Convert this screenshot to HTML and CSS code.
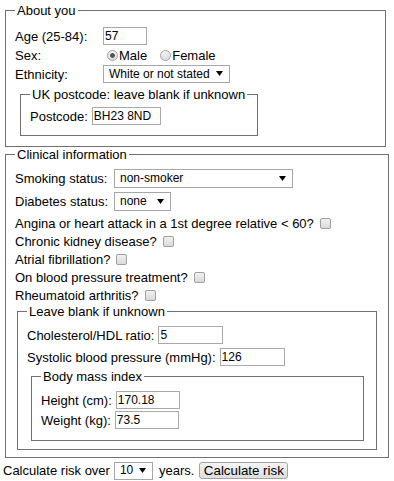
FILE: index.html
```html
<!DOCTYPE html>
<html lang="en">
<head>
<meta charset="utf-8">
<title>Risk calculator</title>
<link rel="stylesheet" href="styles.css">
</head>
<body>
<div class="page">
  <form class="form-col">
    <fieldset class="fs fs-about">
      <legend>About you</legend>
      <div class="about-grid">
        <span class="lbl">Age (25-84):</span>
        <input class="txt w-age" type="text" value="57">
        <span class="lbl">Sex:</span>
        <span class="radios">
          <label class="opt"><input class="radio" type="radio" name="sex" checked>Male</label>
          <label class="opt opt-2"><input class="radio" type="radio" name="sex">Female</label>
        </span>
        <span class="lbl">Ethnicity:</span>
        <span class="sel w-eth"><select><option>White or not stated</option></select><svg class="arrow" viewBox="0 0 7 5" width="7" height="5"><polygon points="0,0 7,0 3.5,5"/></svg></span>
      </div>
      <fieldset class="fs fs-postcode">
        <legend>UK postcode: leave blank if unknown</legend>
        <div class="row"><span class="lbl">Postcode:</span><input class="txt w-post" type="text" value="BH23 8ND"></div>
      </fieldset>
    </fieldset>

    <fieldset class="fs fs-clin">
      <legend>Clinical information</legend>
      <div class="row row-sel row-smoke"><span class="lbl lbl-fixed">Smoking status:</span><span class="sel w-smoke"><select><option>non-smoker</option></select><svg class="arrow" viewBox="0 0 7 5" width="7" height="5"><polygon points="0,0 7,0 3.5,5"/></svg></span></div>
      <div class="row row-sel row-diab"><span class="lbl lbl-fixed">Diabetes status:</span><span class="sel w-diab"><select><option>none</option></select><svg class="arrow" viewBox="0 0 7 5" width="7" height="5"><polygon points="0,0 7,0 3.5,5"/></svg></span></div>
      <label class="row row-chk">Angina or heart attack in a 1st degree relative &lt; 60?<input class="chk" type="checkbox"></label>
      <label class="row row-chk">Chronic kidney disease?<input class="chk" type="checkbox"></label>
      <label class="row row-chk">Atrial fibrillation?<input class="chk" type="checkbox"></label>
      <label class="row row-chk">On blood pressure treatment?<input class="chk" type="checkbox"></label>
      <label class="row row-chk">Rheumatoid arthritis?<input class="chk" type="checkbox"></label>

      <fieldset class="fs fs-blank">
        <legend>Leave blank if unknown</legend>
        <div class="row row-chol"><span class="lbl">Cholesterol/HDL ratio:</span><input class="txt w-num" type="text" value="5"></div>
        <div class="row"><span class="lbl">Systolic blood pressure (mmHg):</span><input class="txt w-num" type="text" value="126"></div>
        <fieldset class="fs fs-bmi">
          <legend>Body mass index</legend>
          <div class="row row-h"><span class="lbl">Height (cm):</span><input class="txt w-bmi" type="text" value="170.18"></div>
          <div class="row"><span class="lbl">Weight (kg):</span><input class="txt w-bmi" type="text" value="73.5"></div>
        </fieldset>
      </fieldset>
    </fieldset>

    <div class="calc-row">
      <span>Calculate risk over</span>
      <span class="sel w-years"><select><option>10</option></select><svg class="arrow" viewBox="0 0 7 5" width="7" height="5"><polygon points="0,0 7,0 3.5,5"/></svg></span>
      <span class="years">years.</span>
      <button class="btn" type="button">Calculate risk</button>
    </div>
  </form>
</div>
</body>
</html>
```

FILE: styles.css
```css
* {
  box-sizing: border-box;
}

html,
body {
  margin: 0;
  padding: 0;
  background: #ffffff;
}

body {
  width: 394px;
  height: 481px;
  overflow: hidden;
  font-family: "Liberation Sans", Arial, sans-serif;
  font-size: 13px;
  line-height: 15px;
  color: #000000;
}

.page {
  display: flex;
  align-items: flex-start;
  padding: 3px 0 0 3px;
}

.form-col {
  flex: none;
  width: 388px;
  margin: 0;
}

.fs {
  margin: 0 0 0 2px;
  padding: 0 9px;
  border: 1px solid #707070;
  min-width: 0;
}

.fs legend {
  padding: 0 2px;
  line-height: 15px;
}

.fs-about {
  width: 381px;
  padding-top: 9px;
  padding-bottom: 10px;
}

.fs-postcode {
  width: 238px;
  margin-left: 5px;
  margin-top: 4px;
  padding-top: 5px;
  padding-bottom: 10px;
}

.fs-clin {
  width: 384px;
  padding-top: 7px;
  padding-bottom: 7px;
}

.fs-blank {
  width: 360px;
  margin-left: 2px;
  padding-top: 7px;
  padding-bottom: 8px;
}

.fs-bmi {
  width: 333px;
  margin-left: 4px;
  margin-top: 3px;
  padding-top: 7px;
  padding-bottom: 11px;
}

.about-grid {
  display: grid;
  grid-template-columns: 88px auto;
  grid-auto-rows: 18px;
  row-gap: 1px;
  align-items: center;
}

.row {
  display: flex;
  align-items: center;
  height: 18px;
  gap: 4px;
  white-space: nowrap;
}

.row-sel {
  height: 19px;
  gap: 0;
}

.row-smoke {
  margin-bottom: 4px;
}

.row-diab {
  margin-bottom: 3px;
}

.lbl-fixed {
  width: 99px;
  flex: none;
}

.row-chk {
  gap: 0;
}

.row-chol {
  margin-bottom: 4px;
}

.row-h {
  margin-bottom: 2px;
}

.txt {
  height: 18px;
  margin: 0;
  padding: 0 1px;
  border: 1px solid #a9a9a9;
  border-radius: 0;
  background: #ffffff;
  font-family: inherit;
  font-size: 12px;
  line-height: 15px;
  color: #000000;
  outline: none;
}

.w-age {
  width: 44px;
}

.w-post {
  width: 69px;
}

.w-num {
  width: 65px;
}

.w-bmi {
  width: 64px;
}

.radios {
  display: flex;
  align-items: center;
  height: 18px;
}

.opt {
  display: flex;
  align-items: center;
}

.opt-2 {
  margin-left: 9px;
}

.radio {
  appearance: none;
  -webkit-appearance: none;
  width: 11px;
  height: 11px;
  margin: 0 1px 0 4px;
  border: 1px solid #a2a2a2;
  border-radius: 50%;
  background: linear-gradient(#f3f3f3, #dcdcdc);
}

.radio:checked {
  background:
    radial-gradient(circle at 50% 50%, #555555 0, #555555 2px, rgba(85, 85, 85, 0) 2.8px),
    linear-gradient(#f3f3f3, #dcdcdc);
}

.chk {
  appearance: none;
  -webkit-appearance: none;
  flex: none;
  width: 11px;
  height: 11px;
  margin: 1px 0 0 6px;
  border: 1px solid #a0a0a0;
  border-radius: 2px;
  background: linear-gradient(#f1f1f1, #dadada);
}

.sel {
  position: relative;
  display: inline-block;
  flex: none;
}

.sel select {
  appearance: none;
  -webkit-appearance: none;
  display: block;
  width: 100%;
  height: 100%;
  margin: 0;
  padding: 0 0 0 5px;
  border: 1px solid #a6a6a6;
  border-radius: 0;
  background: #ffffff;
  font-family: inherit;
  font-size: 12px;
  line-height: 15px;
  color: #000000;
  outline: none;
}

.sel .arrow {
  position: absolute;
  right: 7px;
  top: 50%;
  margin-top: -3px;
  fill: #000000;
  pointer-events: none;
}

.w-eth {
  width: 127px;
  height: 18px;
}

.w-smoke {
  width: 179px;
  height: 19px;
}

.w-diab {
  width: 57px;
  height: 19px;
}

.w-years {
  width: 39px;
  height: 18px;
}

.calc-row {
  display: flex;
  align-items: center;
  height: 19px;
  margin-top: 3px;
  white-space: nowrap;
}

.calc-row .w-years {
  margin-left: 4px;
}

.years {
  margin-left: 6px;
}

.btn {
  width: 89px;
  height: 17px;
  margin: 0 0 0 5px;
  padding: 0;
  border: 1px solid #a3a3a3;
  border-radius: 3px;
  background: linear-gradient(#f4f4f4, #dedede);
  font-family: inherit;
  font-size: 13.333px;
  line-height: 15px;
  color: #000000;
}
```
